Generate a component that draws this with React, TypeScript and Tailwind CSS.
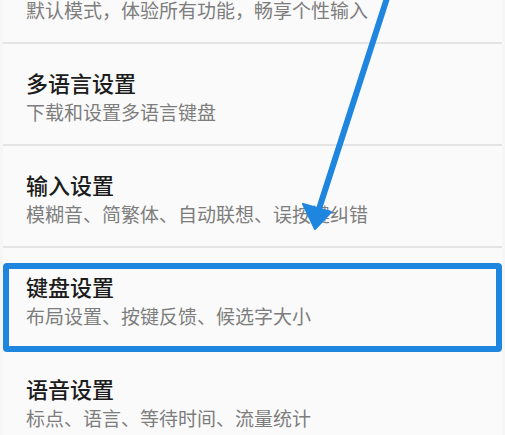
import React from "react";

const rows = [
  { title: "多语言设置", sub: "下载和设置多语言键盘" },
  { title: "输入设置", sub: "模糊音、简繁体、自动联想、误按键纠错" },
  { title: "键盘设置", sub: "布局设置、按键反馈、候选字大小" },
  { title: "语音设置", sub: "标点、语言、等待时间、流量统计" },
];

const font = { fontFamily: '"Noto Sans CJK SC", "Noto Sans", sans-serif' };

export default function App() {
  return (
    <div className="relative w-[505px] h-[435px] overflow-hidden bg-[#f6f6f6]" style={font}>
      <div className="mx-[3px] bg-[#fafafa] h-full">
        <div className="h-[42px]">
          <div className="pl-[23px] text-[19px] leading-[20px] text-[#7d7d7d]">
            默认模式，体验所有功能，畅享个性输入
          </div>
        </div>
        {rows.map((r) => (
          <div key={r.title} className="h-[102px] border-t-2 border-[#e4e4e4] pl-[23px]">
            <div className="pt-[27px] text-[22px] leading-[22px] font-medium text-[#1c1c1c]">{r.title}</div>
            <div className="mt-[9px] text-[19px] leading-[19px] text-[#7d7d7d]">{r.sub}</div>
          </div>
        ))}
      </div>
      <div className="absolute left-[3px] top-[263px] w-[499px] h-[89px] border-[6px] border-[#1f86e0] rounded-[4px]" />
      <svg className="absolute left-0 top-0" width="505" height="435" viewBox="0 0 505 435">
        <line x1="388" y1="-5" x2="318" y2="212" stroke="#1f86e0" strokeWidth="6" strokeLinecap="round" />
        <polygon points="315,229 303,204 331,212" fill="#1f86e0" stroke="#1f86e0" strokeWidth="2" strokeLinejoin="round" />
      </svg>
    </div>
  );
}
